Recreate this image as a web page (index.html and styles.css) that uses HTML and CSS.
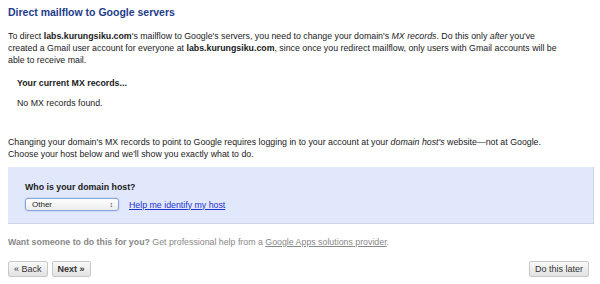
FILE: index.html
```html
<!DOCTYPE html>
<html lang="en">
<head>
  <meta charset="UTF-8">
  <title>Direct mailflow to Google servers</title>
  <link rel="stylesheet" href="styles.css">
</head>
<body>

<h2>Direct mailflow to Google servers</h2>

<p class="intro">
  To direct <b>labs.kurungsiku.com</b>'s mailflow to Google's servers, you need to change your domain's <i>MX records</i>. Do this only <i>after</i> you've<br>
  created a Gmail user account for everyone at <b>labs.kurungsiku.com</b>, since once you redirect mailflow, only users with Gmail accounts will be<br>
  able to receive mail.
</p>

<!-- current records -->
<div class="current">
  <div class="current-title">Your current MX records...</div>
  <div class="current-list">No MX records found.</div>
</div>

<p class="explain">
  Changing your domain's MX records to point to Google requires logging in to your account at your <i>domain host's</i> website&mdash;not at Google.<br>
  Choose your host below and we'll show you exactly what to do.
</p>

<div class="host-box">
  <div class="host-title">Who is your domain host?</div>
  <div class="host-row">
    <div class="host-select">
      <span>Other</span>
      <span class="arrows">&#x2195;</span>
    </div>
    <a href="#">Help me identify my host</a>
  </div>
</div>

<p class="helper">
  <b>Want someone to do this for you?</b> Get professional help from a <a href="#">Google Apps solutions provider</a>.
</p>

<div class="nav">
  <div class="nav-left">
    <button>&laquo; Back</button>
    <button class="strong">Next &raquo;</button>
  </div>
  <button>Do this later</button>
</div>

</body>
</html>
```

FILE: styles.css
```css
* { box-sizing: border-box; }
body {
  margin: 0;
  padding: 5px 0 0 8px;
  font-family: "Liberation Sans", Arial, sans-serif;
  font-size: 8.8px;
  line-height: 12px;
  color: #1a1a1a;
  background: white;
}
h2 {
  margin: 0;
  font-size: 10.5px;
  line-height: 14px;
  color: #1d3c8a;
}
.intro {
  margin: 11px 0 0 0;
}
.current {
  padding: 0 9px;
  margin-top: 11px;
}
.current-title {
  font-weight: bold;
}
.current-list {
  margin-top: 8px;
}
.explain {
  margin: 27px 0 0 0;
}
.host-box {
  margin-top: 7px;
  margin-right: 6px;
  background-color: #e2e8fc;
  border-right: 1px solid #d0d4e6;
  border-bottom: 1px solid #d0d4e6;
  padding: 14px 17px 12px 17px;
}
.host-title {
  font-weight: bold;
}
.host-row {
  display: flex;
  align-items: center;
  gap: 10px;
  margin-top: 5px;
}
.host-select {
  width: 94px;
  height: 13px;
  display: flex;
  justify-content: space-between;
  align-items: center;
  padding: 0 5px 0 6px;
  font-size: 8px;
  background: linear-gradient(#ffffff, #ececec);
  border: 1px solid #8aa6d6;
  border-radius: 3px;
  box-shadow: 0 0 2px #9fbce8;
}
.arrows {
  font-size: 7px;
}
.host-row a {
  color: #2233cc;
}
.helper {
  margin: 12px 0 0 0;
  color: #888;
}
.helper a {
  color: #888;
}
.nav {
  display: flex;
  justify-content: space-between;
  margin-top: 13px;
  margin-right: 11px;
}
.nav-left {
  display: flex;
  gap: 4px;
}
button {
  font-family: "Liberation Sans", Arial, sans-serif;
  font-size: 9px;
  height: 16px;
  padding: 0 5px;
  color: #333;
  background: linear-gradient(#fafafa, #e2e2e2);
  border: 1px solid #c8c8c8;
  border-radius: 2px;
}
button.strong {
  font-weight: bold;
}
```
